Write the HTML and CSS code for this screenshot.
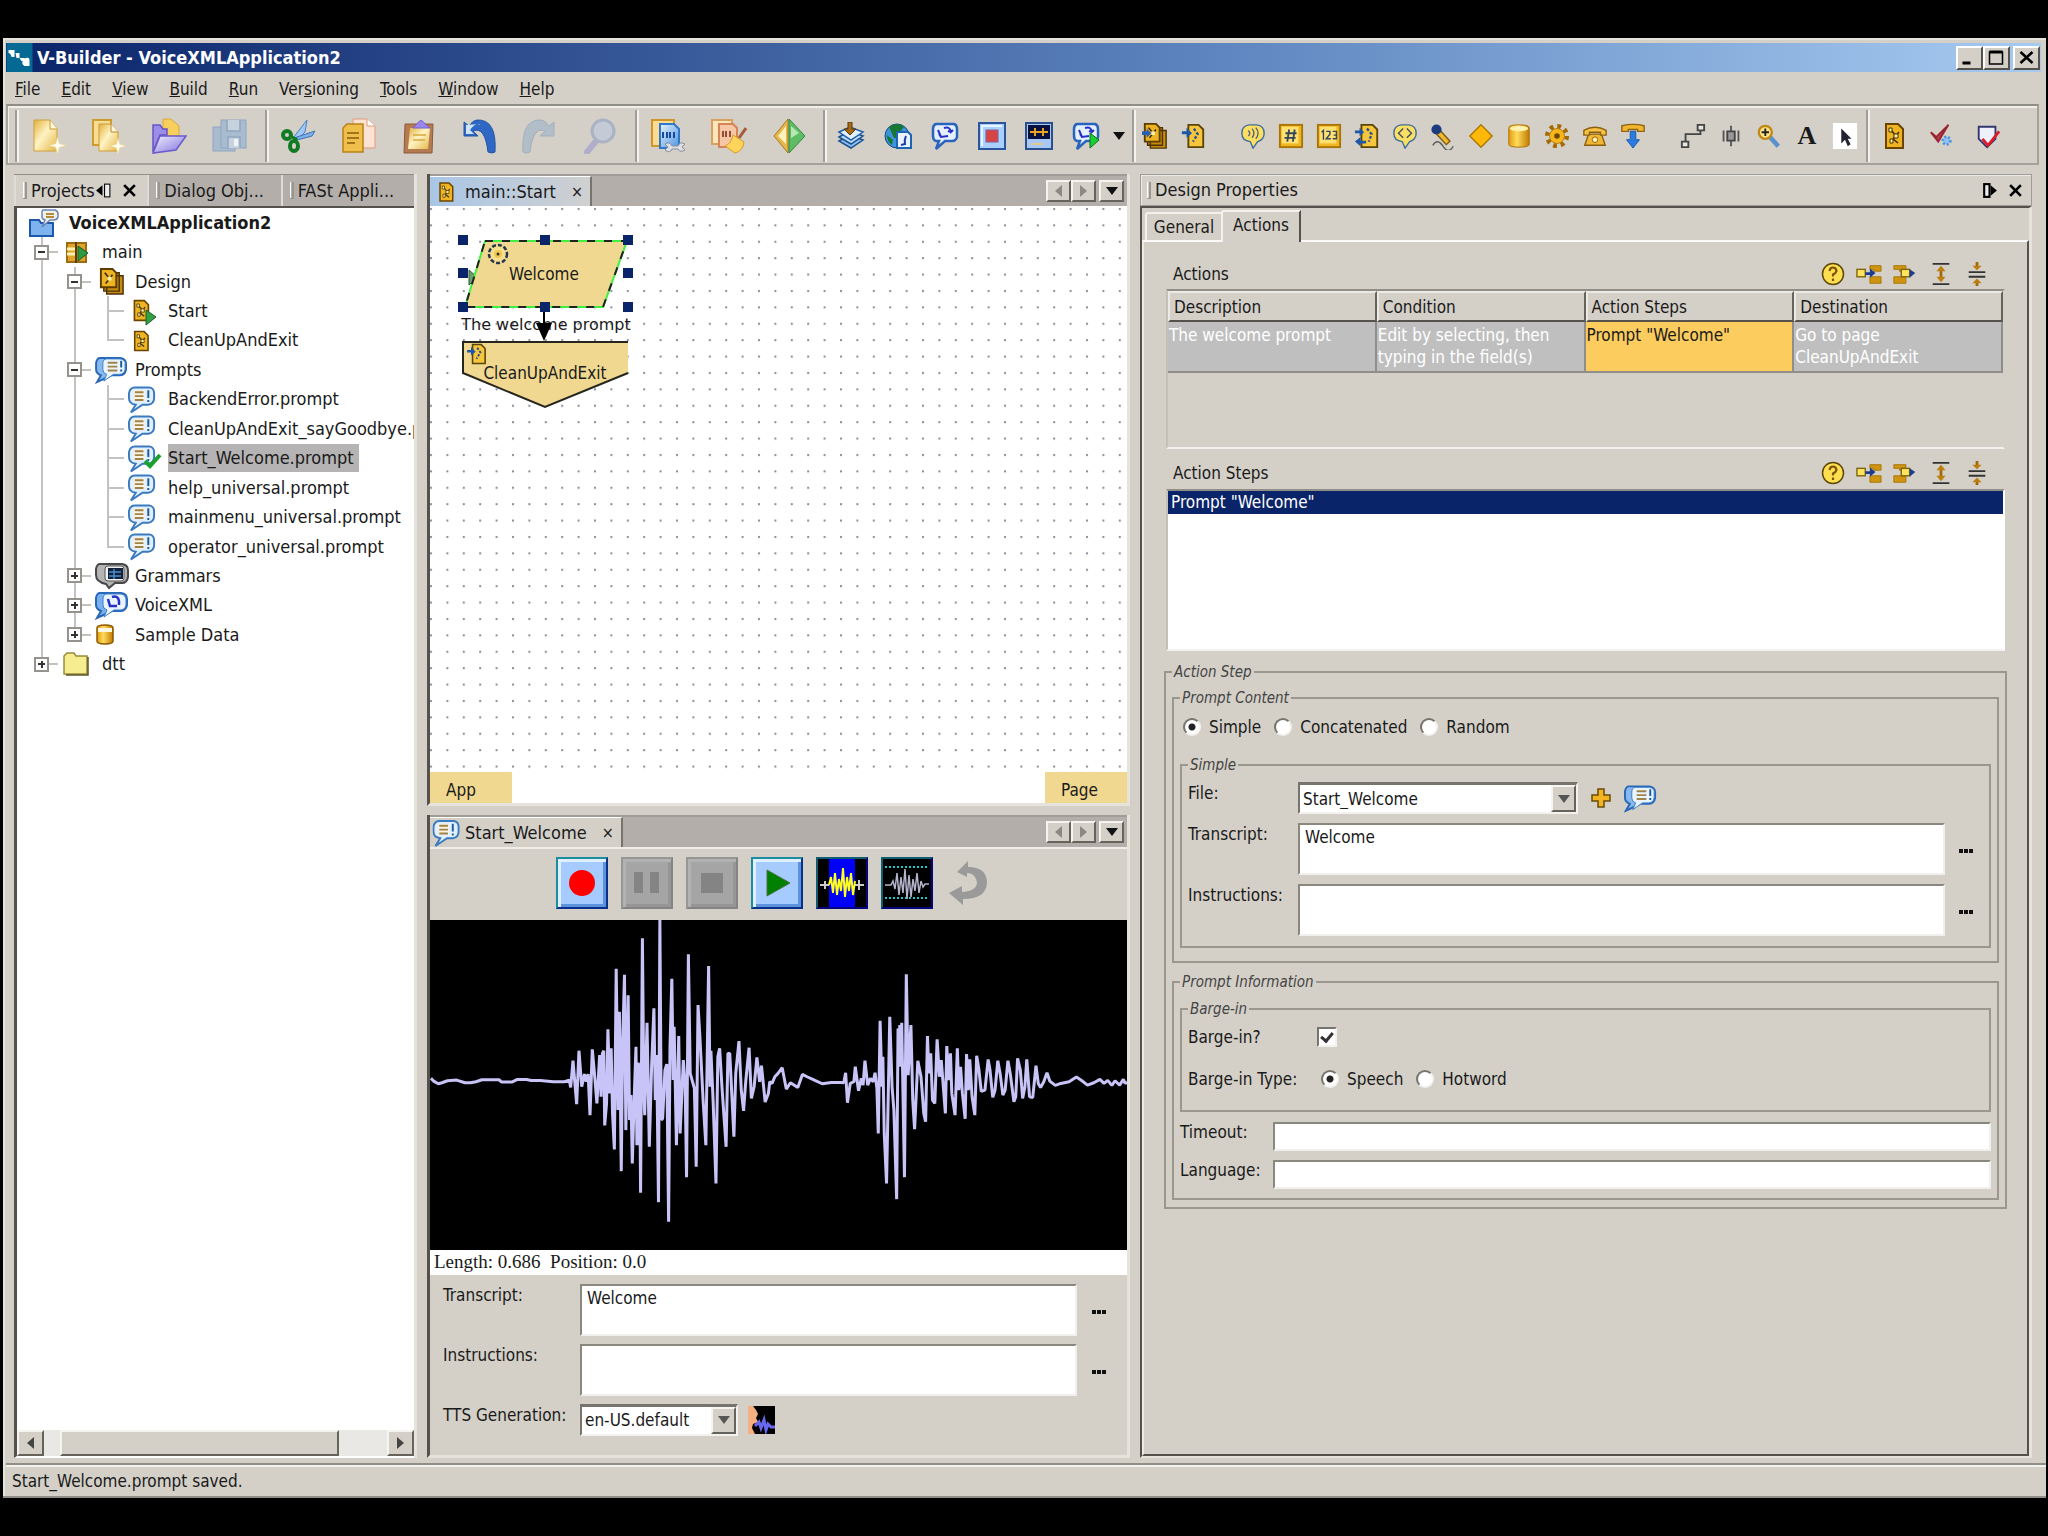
FILE: index.html
```html
<!DOCTYPE html>
<html lang="en">
<head>
<meta charset="utf-8">
<title>V-Builder - VoiceXMLApplication2</title>
<link rel="stylesheet" href="styles.css">
</head>
<body>
<svg class="defs" width="0" height="0" aria-hidden="true">
  <defs>
    <linearGradient id="gold" x1="0" y1="0" x2="1" y2="1"><stop offset="0" stop-color="#fff0b8"/><stop offset="1" stop-color="#d9a62c"/></linearGradient>
    <linearGradient id="paper" x1="0" y1="0" x2="1" y2="1"><stop offset="0" stop-color="#e2b03c"/><stop offset=".45" stop-color="#fff3c4"/><stop offset="1" stop-color="#e3b748"/></linearGradient>
    <linearGradient id="blue" x1="0" y1="0" x2="1" y2="1"><stop offset="0" stop-color="#e4f2ff"/><stop offset="1" stop-color="#4f94e0"/></linearGradient>
    <linearGradient id="violet" x1="0" y1="0" x2="1" y2="1"><stop offset="0" stop-color="#f2f0ff"/><stop offset="1" stop-color="#7d6fdc"/></linearGradient>
    <linearGradient id="cyl" x1="0" x2="1"><stop offset="0" stop-color="#e39a10"/><stop offset=".4" stop-color="#ffdc5c"/><stop offset="1" stop-color="#c27a00"/></linearGradient>
    <pattern id="grid" width="16.4" height="16.4" patternUnits="userSpaceOnUse"><rect x="0" y="2" width="2" height="2" fill="#8a8aa0"/></pattern>
  </defs>
  <symbol id="star" viewBox="0 0 14 14"><path d="M7 0L8.500 5.500 14 7 8.500 8.500 7 14 5.500 8.500 0 7 5.500 5.500Z" fill="#fffdf0" stroke="#f0d890" stroke-width=".5"/></symbol>
  <symbol id="new" viewBox="0 0 36 36"><path d="M3 2H19L26 11V33H3Z" fill="url(#paper)" stroke="#d0a23a"/><path d="M19 2V11H26" fill="#fff8dc" stroke="#c99a30"/><use href="#star" x="18" y="19" width="17" height="17"/></symbol>
  <symbol id="newcopy" viewBox="0 0 36 36"><path d="M2 2H20V27H2Z" fill="#f6dc94" stroke="#cf9c30" stroke-width="2"/><path d="M8 6H20L27 14V33H8Z" fill="url(#paper)" stroke="#cf9c30"/><path d="M20 6V14H27" fill="#fff8dc" stroke="#b58a28"/><use href="#star" x="19" y="20" width="16" height="16"/></symbol>
  <symbol id="open" viewBox="0 0 36 36"><path d="M12 1H20L28 8V18H12Z" fill="#f6cf5c" stroke="#d9a93a"/><path d="M2 7H9L12 11H16V17H9L2 34Z" fill="#9c8ee6" stroke="#6654c8" stroke-width="1.500"/><path d="M9 18H35L25 32 2 35Z" fill="url(#violet)" stroke="#6c5acb" stroke-width="1.500"/></symbol>
  <symbol id="save" viewBox="0 0 36 36"><g fill="#a9bccf" stroke="#8fa6bf"><rect x="2" y="9" width="22" height="24"/><rect x="10" y="2" width="25" height="28"/></g><path d="M16 2V13H29V2M17 30V19H29V30" fill="#c6d2dd" stroke="#8fa6bf" stroke-width="1.500"/><rect x="23" y="21" width="4" height="7" fill="#f0f2f4"/></symbol>
  <symbol id="cut" viewBox="0 0 36 36"><path d="M12 20L26 2 24 14 15 23Z" fill="#9fc8f4" stroke="#4c7fc0"/><path d="M13 20L34 13 31 18 16 22Z" fill="#7fb0ec" stroke="#3d72b8"/><g fill="none" stroke="#127a22" stroke-width="4"><ellipse cx="6" cy="17" rx="4" ry="4"/><ellipse cx="13" cy="28" rx="4" ry="5"/></g><path d="M9 18L15 21 14 24" stroke="#127a22" stroke-width="3" fill="none"/></symbol>
  <symbol id="copy" viewBox="0 0 36 36"><path d="M12 1H26L34 8V30H12Z" fill="#fbe3d4" stroke="#e09a7a"/><path d="M26 1V8H34" fill="#fff" stroke="#e09a7a"/><path d="M2 10L6 6H22V34H2Z" fill="#eebf4a" stroke="#b98218" stroke-width="1.500"/><path d="M6 15H18M6 20H18M6 25H14" stroke="#a3741a" stroke-width="2"/></symbol>
  <symbol id="paste" viewBox="0 0 36 36"><path d="M4 6H32L31 35H3Z" fill="#b67a50" stroke="#8a5a3c"/><path d="M9 10H29L27 31H7Z" fill="url(#paper)"/><path d="M12 17H25M12 22H24" stroke="#d8a840" stroke-width="1.500"/><path d="M12 10L16 6Q20-1 24 6L29 10Z" fill="#9a86ec" stroke="#7460cc"/></symbol>
  <symbol id="undo" viewBox="0 0 36 36"><path d="M3 4V18H17L12 13Q24 8 27 34 31 36 34 34 36 1 16 2 12 2 8 8Z" fill="#2f68c4" stroke="#2454a4"/><path d="M5 7V16H13L9 12Q13 5 20 6" fill="#cfe4ff"/></symbol>
  <symbol id="redo" viewBox="0 0 36 36"><path d="M33 4V18H19L24 13Q12 8 9 34 5 36 2 34 0 1 20 2 24 2 28 8Z" fill="#b1bdc7" stroke="#a2b0bd"/></symbol>
  <symbol id="find" viewBox="0 0 36 36"><path d="M16 22L6 34" stroke="#b0aecb" stroke-width="6" stroke-linecap="round"/><circle cx="22" cy="13" r="11" fill="#c5cbd6" stroke="#a9b3c4" stroke-width="3"/></symbol>
  <symbol id="build" viewBox="0 0 36 36"><rect x="1" y="2" width="22" height="26" fill="#f9dc92" stroke="#d0962c" stroke-width="2"/><path d="M9 6H23L28 11V30H9Z" fill="url(#blue)" stroke="#2f78d0" stroke-width="2"/><path d="M12 14V20M16 14V20M19 14V20M23 14V20" stroke="#164a9c" stroke-width="2"/><path d="M14 26Q19 23 21 28L27 28Q29 23 34 26L31 29 34 32Q29 35 27 31L21 31Q19 36 14 32L17 29Z" fill="#dcdee4" stroke="#888e98"/></symbol>
  <symbol id="clean" viewBox="0 0 36 36"><rect x="1" y="2" width="20" height="24" fill="#fbe6ba" stroke="#d9a060" stroke-width="2"/><path d="M8 6H22L26 10V29H8Z" fill="#f6c7a4" stroke="#d88258" stroke-width="2"/><path d="M12 13V19M15 13V19M19 13V19" stroke="#934f35" stroke-width="2"/><path d="M35 10L28 20" stroke="#a45c36" stroke-width="3"/><path d="M22 17L33 24Q32 33 24 35L14 28Q20 26 22 17Z" fill="#ffd45c" stroke="#d79a26"/></symbol>
  <symbol id="validate" viewBox="0 0 36 36"><path d="M17 1V35L3 18Z" fill="#e7b74c" stroke="#a87b24"/><path d="M15 8V26L7 18Z" fill="#fff2bc"/><path d="M18 1V35L34 18Z" fill="#5fbc65" stroke="#2c8838"/><path d="M20 8V20L28 15Z" fill="#b7e8b2"/></symbol>
  <symbol id="deploy" viewBox="0 0 28 28"><path d="M2 19L13 13 26 18 14 26Z" fill="#8fc0f4" stroke="#1c508c" stroke-width="1.500"/><path d="M2 15L13 9 26 14 14 22Z" fill="#b9dcff" stroke="#1c508c" stroke-width="1.500"/><path d="M2 10L13 5 26 10 14 18Z" fill="#dff0ff" stroke="#2260a8" stroke-width="1.500"/><path d="M15 0V7H19L13 13 7 7H11V0Z" fill="#a56a14" stroke="#5c3600"/></symbol>
  <symbol id="globe" viewBox="0 0 28 28"><circle cx="13" cy="14" r="12" fill="#3f92dc" stroke="#174a80"/><path d="M5 5Q14-1 20 5L15 11 17 16 10 16ZM3 13L9 18 8 23Q3 20 3 13Z" fill="#177832"/><path d="M13 10H24L27 13V26H13Z" fill="#e9f4ff" stroke="#1d64b4" stroke-width="2"/><path d="M22 14Q20 18 21 22L17 23" stroke="#1b3eb0" stroke-width="2" fill="none"/></symbol>
  <symbol id="vxml" viewBox="0 0 28 28"><path d="M5 2H23Q26 3 26 7V15Q25 19 21 19H14L5 27 8 19H5Q2 18 2 14V7Q2 3 5 2Z" fill="#e4f0ff" stroke="#2864bc" stroke-width="2.500"/><path d="M7 8L10 15 17 14M13 6Q19 4 20 10L22 8M20 10L17 9M10 15L8 12" stroke="#2430c8" stroke-width="2" fill="none"/></symbol>
  <symbol id="stop" viewBox="0 0 28 28"><rect x="1" y="1" width="26" height="26" fill="#a9d0ff" stroke="#29559c" stroke-width="2"/><path d="M4 24V4H24" fill="none" stroke="#e6f4ff" stroke-width="2"/><rect x="8" y="8" width="12" height="12" fill="#d84444" stroke="#7b5f96"/></symbol>
  <symbol id="monitor" viewBox="0 0 28 28"><rect x="1" y="1" width="26" height="26" fill="#a9c9f4" stroke="#28508c" stroke-width="2"/><rect x="3" y="3" width="22" height="14" fill="#081040"/><path d="M5 10H23M10 6V14M18 6V14" stroke="#e9a424" stroke-width="2"/><path d="M6 22H18" stroke="#e0c890" stroke-width="2"/></symbol>
  <symbol id="vrun" viewBox="0 0 28 28"><use href="#vxml" width="28" height="28"/><path d="M18 11L27 18 18 26Z" fill="#18d030" stroke="#087018"/></symbol>
  <symbol id="page" viewBox="0 0 24 28"><path d="M4 2H16L21 7V26H4Z" fill="#eeb422" stroke="#6a4400" stroke-width="2"/><path d="M9 8L14 14M17 10L11 17M11 17L16 21" stroke="#3a2a08" stroke-width="1.500"/><path d="M7 6H10V10H7ZM12 12H16V16H12ZM8 17H11V21H8Z" fill="#fff3a0" stroke="#4a3206"/></symbol>
  <symbol id="pages" viewBox="0 0 28 28"><path d="M9 8H26V27H9ZM6 5H22V24H6Z" fill="#c68b12" stroke="#4c3200" stroke-width="1.500"/><path d="M3 1H15L19 5V20H3Z" fill="#ecb322" stroke="#5c3c00" stroke-width="2"/><path d="M7 5L12 11L8 16M15 7L12 11" stroke="#2a200a" stroke-width="1.500" fill="none"/><rect x="10" y="9" width="4" height="4" fill="#fff2a8"/></symbol>
  <symbol id="inpages" viewBox="0 0 28 28"><use href="#pages" width="28" height="28"/><path d="M0 9H5V6L10 11 5 16V13H0Z" fill="#2a5fb0"/></symbol>
  <symbol id="inpage" viewBox="0 0 28 28"><path d="M9 2H20L25 7V26H9Z" fill="#f6c63c" stroke="#5a4408" stroke-width="2"/><path d="M15 6L19 12L14 20" stroke="#2a4c90" stroke-width="2.500" fill="none" stroke-dasharray="3 2"/><path d="M2 9H7V5L13 11 7 16V12H2Z" fill="#1e56a8"/></symbol>
  <symbol id="sub" viewBox="0 0 28 28"><path d="M8 2H20L25 7V26H8Z" fill="#f6c63c" stroke="#5a4408" stroke-width="2"/><path d="M14 6L19 12L16 20" stroke="#2a4c90" stroke-width="2.500" fill="none" stroke-dasharray="3 2"/><path d="M1 8H6V5L11 10 6 14V11H1ZM13 19H7V15L1 20 7 25V22H13Z" fill="#1e56a8"/></symbol>
  <symbol id="gbubble" viewBox="0 0 28 28"><path d="M10 2H18Q26 3 26 11 26 18 19 20L14 27 11 20Q2 19 2 11 2 3 10 2Z" fill="#fbdf62" stroke="#3c6c9c" stroke-width="1.500"/></symbol>
  <symbol id="speak" viewBox="0 0 28 28"><use href="#gbubble" width="28" height="28"/><path d="M9 8Q12 11 9 14M13 6Q17 11 13 16M17 5Q22 11 17 17" fill="none" stroke="#5a6472" stroke-width="1.500"/></symbol>
  <symbol id="brackets" viewBox="0 0 28 28"><use href="#gbubble" width="28" height="28"/><path d="M12 6L7 11 12 16M16 6L21 11 16 16" fill="none" stroke="#405068" stroke-width="1.500"/></symbol>
  <symbol id="tile" viewBox="0 0 28 28"><rect x="2" y="2" width="24" height="24" fill="#efb61f" stroke="#a8730a" stroke-width="2"/><rect x="4" y="4" width="18" height="18" fill="#ffe070"/></symbol>
  <symbol id="hash" viewBox="0 0 28 28"><use href="#tile" width="28" height="28"/><path d="M12 7L10 20M18 7L16 20M8 11H20M7 16H19" stroke="#33475c" stroke-width="2"/></symbol>
  <symbol id="digits" viewBox="0 0 28 28"><use href="#tile" width="28" height="28"/><path d="M6 10L8 8V18M11 9H15V12L11 17H16M18 9H22V17H18M19 13H22" fill="none" stroke="#33475c" stroke-width="1.500"/></symbol>
  <symbol id="mic" viewBox="0 0 28 28"><path d="M9 10L20 22" stroke="#7c5a10" stroke-width="7"/><path d="M9 10L19 21" stroke="#f0b82c" stroke-width="4"/><circle cx="7" cy="7" r="5.500" fill="#1c3c80"/><path d="M3 24Q8 16 14 25T25 25" fill="none" stroke="#5c5c5c" stroke-width="1.500"/></symbol>
  <symbol id="diamond" viewBox="0 0 28 28"><path d="M14 2L26 14 14 26 2 14Z" fill="#ffb808" stroke="#ac7600" stroke-width="1.500"/></symbol>
  <symbol id="cylinder" viewBox="0 0 28 28"><path d="M3 5Q3 2 14 2T25 5V23Q25 26 14 26T3 23Z" fill="url(#cyl)" stroke="#aa7000"/><ellipse cx="14" cy="6" rx="10" ry="3" fill="#fff0ac"/></symbol>
  <symbol id="gear" viewBox="0 0 28 28"><circle cx="14" cy="14" r="10.500" fill="none" stroke="#a36a04" stroke-width="5" stroke-dasharray="4 4.250"/><circle cx="14" cy="14" r="8" fill="#f7b71c" stroke="#b27a0a"/><circle cx="14" cy="14" r="3" fill="#6c4804"/></symbol>
  <symbol id="phone" viewBox="0 0 28 28"><path d="M7 12H21L25 24H3Z" fill="#f0b733" stroke="#8c5f0e" stroke-width="1.500"/><path d="M2 8Q14 1 26 8V13H20V10H8V13H2Z" fill="#f7c344" stroke="#8c5f0e" stroke-width="1.500"/><circle cx="14" cy="18" r="3" fill="#fff2b4" stroke="#8c5f0e"/></symbol>
  <symbol id="hang" viewBox="0 0 28 28"><path d="M2 3Q14 0 26 3V9H19V7H9V9H2Z" fill="#f2b62e" stroke="#906410" stroke-width="1.500"/><path d="M11 9H17V18H21L14 27 7 18H11Z" fill="#2c7be0" stroke="#1a58a8"/></symbol>
  <symbol id="link" viewBox="0 0 28 28"><path d="M6 20V12H22V6" fill="none" stroke="#444" stroke-width="2"/><path d="M19 2H26V8H19ZM2 20H9V26H2Z" fill="#e8e6e0" stroke="#444" stroke-width="2"/></symbol>
  <symbol id="align" viewBox="0 0 28 28"><path d="M10 9H18V19H10Z" fill="#999" stroke="#444" stroke-width="2"/><path d="M14 3V9M14 19V25M6 8V20M22 8V20" stroke="#555" stroke-width="2"/></symbol>
  <symbol id="zoomin" viewBox="0 0 28 28"><path d="M15 15L24 25" stroke="#5a90cc" stroke-width="5"/><circle cx="10" cy="10" r="7" fill="#ffe488" stroke="#c48814" stroke-width="2.500"/><path d="M10 6V14M6 10H14" stroke="#222" stroke-width="2"/></symbol>
  <symbol id="cursor" viewBox="0 0 28 28"><rect x="1" y="0" width="26" height="28" fill="#fff"/><path d="M10 6V22L14 18 17 25 20 23 17 17H21Z" fill="#223"/></symbol>
  <symbol id="chkset" viewBox="0 0 28 28"><path d="M3 10L9 15 22 2 11 20Z" fill="#b6434e" stroke="#9a2430" stroke-width="2"/><circle cx="20" cy="19" r="4" fill="#8fc4f8" stroke="#4c90dc" stroke-width="3" stroke-dasharray="2 2"/></symbol>
  <symbol id="shield" viewBox="0 0 28 28"><path d="M4 4H22V17L13 26 4 17Z" fill="#eef0fc" stroke="#30366c" stroke-width="2"/><path d="M8 17L14 24 26 9" fill="none" stroke="#dc1c28" stroke-width="3"/></symbol>
  <symbol id="bubble" viewBox="0 0 30 29"><path d="M7 2H22Q27 3 27 8V13Q27 19 21 20H15L3 28 8 20Q1 19 1 13V8Q2 2 7 2Z" fill="#e1efff" stroke="#3a7abf" stroke-width="2"/><rect x="6" y="5" width="11" height="11" fill="#faf3e4"/><path d="M7 7H16M7 11H16M7 15H16" stroke="#a08346" stroke-width="2"/><path d="M21 5V13M21 15V17" stroke="#1c5c9c" stroke-width="2"/></symbol>
  <symbol id="bubbles" viewBox="0 0 36 29"><path d="M5 2H26Q32 3 32 8V14Q31 20 25 20H17L2 27 6 20Q1 18 1 14V7Q2 2 5 2Z" fill="#87b8ee" stroke="#2868b8" stroke-width="2"/><path d="M12 3H26Q32 4 31 9V14Q30 19 25 19H19L9 26 12 19Q8 18 8 14V8Q8 3 12 3Z" fill="#eaf4ff" stroke="#3c7cc4"/><path d="M13 7H23M13 11H23M13 15H23" stroke="#a08346" stroke-width="2"/><path d="M27 5V12M27 14V16" stroke="#1c5c9c" stroke-width="2"/></symbol>
  <symbol id="i-root" viewBox="0 0 44 29"><path d="M5 12H14L16 15H28V28H5Z" fill="#7db4f0" stroke="#1c58ac" stroke-width="2"/><path d="M18 2H30Q33 3 33 6V9Q32 12 29 12H25L17 19 20 12Q17 11 17 9V5Q17 2 18 2Z" fill="#f0f0e4" stroke="#6a84b8" stroke-width="1.500"/><path d="M21 6H29M21 9H29" stroke="#b08c3c" stroke-width="2"/></symbol>
  <symbol id="i-main" viewBox="0 0 44 29"><rect x="9" y="5" width="19" height="19" fill="#e0a428" stroke="#9c6c10" stroke-width="2"/><path d="M18 4V25" stroke="#5c3c04" stroke-width="2"/><path d="M9 11H17M9 16H17" stroke="#fff1b4" stroke-width="3"/><path d="M20 8L30 15 20 23Z" fill="#2e9840" stroke="#176024"/></symbol>
  <symbol id="i-design" viewBox="0 0 44 29"><use href="#pages" x="7" y="1" width="27" height="27"/></symbol>
  <symbol id="i-start" viewBox="0 0 44 29"><use href="#page" x="7" y="2" width="20" height="23"/><path d="M22 13L32 20 22 28Z" fill="#33a044" stroke="#176024"/></symbol>
  <symbol id="i-page" viewBox="0 0 44 29"><use href="#page" x="7" y="4" width="20" height="22"/></symbol>
  <symbol id="i-prompts" viewBox="0 0 44 29"><use href="#bubbles" x="4" y="1" width="35" height="28"/></symbol>
  <symbol id="i-prompt" viewBox="0 0 44 29"><use href="#bubble" x="4" y="0" width="29" height="29"/></symbol>
  <symbol id="i-promptok" viewBox="0 0 44 29"><use href="#bubble" x="4" y="0" width="29" height="29"/><path d="M21 17L26 22 36 11" fill="none" stroke="#1aa02c" stroke-width="4"/></symbol>
  <symbol id="i-grammars" viewBox="0 0 44 29"><path d="M9 3H31Q37 4 37 9V16Q36 22 31 22H24L18 27 15 23Q5 21 5 14V8Q6 3 9 3Z" fill="#b4b4b4" stroke="#484848" stroke-width="2"/><rect x="14" y="5" width="19" height="15" rx="3" fill="#f0f0f0" stroke="#555"/><rect x="17" y="7" width="15" height="11" fill="#122038"/><path d="M18 11H30M18 15H30M23 8V18" stroke="#4a8cd0" stroke-width="1.500"/></symbol>
  <symbol id="i-vxml" viewBox="0 0 44 29"><path d="M9 2H30Q36 3 36 8V14Q35 20 29 20H21L6 27 10 20Q5 18 5 14V7Q6 2 9 2Z" fill="#79b0ee" stroke="#2868b8" stroke-width="2"/><path d="M16 3H30Q35 4 35 9V14Q34 19 29 19H23L13 26 16 19Q12 18 12 14V8Q12 3 16 3Z" fill="#eaf4ff" stroke="#3c7cc4"/><path d="M17 8L19 15 26 15M21 6Q27 4 28 10V14" stroke="#2430c8" stroke-width="2.500" fill="none"/></symbol>
  <symbol id="i-data" viewBox="0 0 44 29"><path d="M6 8Q6 5 14 5T22 8V21Q22 24 14 24T6 21Z" fill="url(#cyl)" stroke="#8c5a00" stroke-width="1.500"/><path d="M7 8H21V12H7Z" fill="#fff8e0"/></symbol>
  <symbol id="i-folder" viewBox="0 0 44 29"><path d="M6 6L9 3H16L18 6H29V24H6Z" fill="#f6ec90" stroke="#9a8a38" stroke-width="1.500"/><path d="M30 7V25H8" fill="none" stroke="#5e5424" stroke-width="1.500"/></symbol>
  <symbol id="help" viewBox="0 0 24 24"><circle cx="12" cy="12" r="10.500" fill="#ffdf50" stroke="#5c4808" stroke-width="1.500"/><path d="M8.500 9Q9 5.500 12 5.500T15.500 9Q15 11 12 12.500V14.500M12 16.500V19" fill="none" stroke="#7c5404" stroke-width="2.200"/></symbol>
  <symbol id="insbefore" viewBox="0 0 28 24"><path d="M15 3H27V9H19V7H15ZM15 15H27V22H15Z" fill="#cf9410" stroke="#a87808"/><rect x="1" y="7" width="9" height="8" fill="#ffe45c" stroke="#7c6410" stroke-width="1.500"/><path d="M10 10H15V6L21 11 15 16V13H10Z" fill="#1c3c8c"/></symbol>
  <symbol id="insafter" viewBox="0 0 28 24"><path d="M2 3H15V9H8V7H2ZM2 15H15V22H2Z" fill="#cf9410" stroke="#a87808"/><rect x="10" y="7" width="9" height="8" fill="#ffe45c" stroke="#7c6410" stroke-width="1.500"/><path d="M19 10V7L25 11 19 16Z" fill="#1c3c8c"/></symbol>
  <symbol id="expand" viewBox="0 0 24 26"><path d="M3 2H21M3 24H21" stroke="#333" stroke-width="2"/><path d="M12 6V20" stroke="#a06808" stroke-width="3"/><path d="M12 4L17 10H7ZM12 22L17 16H7Z" fill="#bd7e10"/></symbol>
  <symbol id="collapse" viewBox="0 0 24 26"><path d="M3 11H21M3 16H21" stroke="#333" stroke-width="2"/><path d="M12 0V5M12 22V26" stroke="#a06808" stroke-width="3"/><path d="M12 9L17 4H7ZM12 18L17 23H7Z" fill="#bd7e10"/></symbol>
  <symbol id="miniwave" viewBox="0 0 48 48"><path d="M2 26H8L10 22 12 30 14 14 16 36 18 18 20 34 22 10 24 40 26 16 28 38 30 20 32 32 34 14 36 34 38 22 40 28 42 25H46" fill="none" stroke="currentColor" stroke-width="1.500"/></symbol>
</svg>

<div class="window">
  <header class="titlebar">
    <svg class="logo" viewBox="0 0 26 29"><rect width="26" height="29" fill="#046a94"/><path d="M2 7H8V14H5Q4 10 2 10Z M9 10H13V15H10Z M13 15H18V18H15Z M17 16Q23 13 23 17V23H18Q14 21 17 16Z" fill="#fff"/></svg>
    <h1 class="title">V-Builder - VoiceXMLApplication2</h1>
    <div class="winbtns">
      <button class="wb" aria-label="Minimize"><svg viewBox="0 0 22 20"><path d="M4 15H12" stroke="#000" stroke-width="3"/></svg></button>
      <button class="wb" aria-label="Maximize"><svg viewBox="0 0 22 20"><path d="M4 4H17V16H4Z" fill="none" stroke="#000" stroke-width="1.500"/><path d="M4 4H17" stroke="#000" stroke-width="3"/></svg></button>
      <button class="wb wb-close" aria-label="Close"><svg viewBox="0 0 22 20"><path d="M5 4L17 15M17 4L5 15" stroke="#000" stroke-width="2.500"/></svg></button>
    </div>
  </header>

  <nav class="menubar">
    <button><u>F</u>ile</button><button><u>E</u>dit</button><button><u>V</u>iew</button><button><u>B</u>uild</button><button><u>R</u>un</button><button>Ver<u>s</u>ioning</button><button><u>T</u>ools</button><button><u>W</u>indow</button><button><u>H</u>elp</button>
  </nav>

  <div class="toolbar" role="toolbar">
    <div class="tgroup big">
      <button aria-label="New"><svg><use href="#new"/></svg></button><button aria-label="New from copy"><svg><use href="#newcopy"/></svg></button><button aria-label="Open"><svg><use href="#open"/></svg></button><button aria-label="Save all"><svg><use href="#save"/></svg></button>
    </div>
    <div class="tgroup big">
      <button aria-label="Cut"><svg><use href="#cut"/></svg></button><button aria-label="Copy"><svg><use href="#copy"/></svg></button><button aria-label="Paste"><svg><use href="#paste"/></svg></button><button aria-label="Undo"><svg><use href="#undo"/></svg></button><button aria-label="Redo"><svg><use href="#redo"/></svg></button><button aria-label="Find"><svg><use href="#find"/></svg></button>
    </div>
    <div class="tgroup big short">
      <button aria-label="Build"><svg><use href="#build"/></svg></button><button aria-label="Clean and build"><svg><use href="#clean"/></svg></button><button aria-label="Validate"><svg><use href="#validate"/></svg></button>
    </div>
    <div class="tgroup mid">
      <button aria-label="Deploy"><svg><use href="#deploy"/></svg></button><button aria-label="Publish"><svg><use href="#globe"/></svg></button><button aria-label="VoiceXML"><svg><use href="#vxml"/></svg></button><button aria-label="Stop"><svg><use href="#stop"/></svg></button><button aria-label="Monitor"><svg><use href="#monitor"/></svg></button><button aria-label="Run"><svg><use href="#vrun"/></svg></button><button class="drop" aria-label="Run options"><span class="tri down"></span></button>
    </div>
    <div class="tgroup small">
      <button aria-label="Go to pages"><svg><use href="#inpages"/></svg></button><button aria-label="Go to page"><svg><use href="#inpage"/></svg></button>
      <span class="space"></span>
      <button aria-label="Prompt"><svg><use href="#speak"/></svg></button><button aria-label="Menu"><svg><use href="#hash"/></svg></button><button aria-label="Form"><svg><use href="#digits"/></svg></button><button aria-label="Subdialog"><svg><use href="#sub"/></svg></button><button aria-label="Script"><svg><use href="#brackets"/></svg></button><button aria-label="Record"><svg><use href="#mic"/></svg></button><button aria-label="Decision"><svg><use href="#diamond"/></svg></button><button aria-label="Data"><svg><use href="#cylinder"/></svg></button><button aria-label="Process"><svg><use href="#gear"/></svg></button><button aria-label="Call"><svg><use href="#phone"/></svg></button><button aria-label="Hang up"><svg><use href="#hang"/></svg></button>
      <span class="space"></span>
      <button aria-label="Connect"><svg><use href="#link"/></svg></button><button aria-label="Align"><svg><use href="#align"/></svg></button><button aria-label="Zoom"><svg><use href="#zoomin"/></svg></button><button class="letter">A</button><button aria-label="Select"><svg><use href="#cursor"/></svg></button>
    </div>
    <div class="tgroup last">
      <button aria-label="Page"><svg><use href="#page"/></svg></button><button aria-label="Check settings"><svg><use href="#chkset"/></svg></button><button aria-label="Check page"><svg><use href="#shield"/></svg></button>
    </div>
  </div>

  <main class="work">
    <section class="panel">
      <div class="ptabs">
        <button class="ptab on"><i class="grip"></i>Projects<svg class="pin" viewBox="0 0 16 16"><path d="M7 3V13L1 8Z" fill="#000"/><rect x="9" y="2" width="5" height="12" fill="#eee" stroke="#000"/></svg><svg class="x" viewBox="0 0 14 14"><path d="M2 2L12 12M12 2L2 12" stroke="#000" stroke-width="2.500"/></svg></button>
        <button class="ptab"><i class="grip"></i>Dialog Obj...</button>
        <button class="ptab"><i class="grip"></i>FASt Appli...</button>
      </div>
      <div class="treebox">
        <ul class="tree">
          <li class="root"><svg><use href="#i-root"/></svg><b>VoiceXMLApplication2</b></li>
          <li><i class="v h"><s class="box minus"></s></i><svg><use href="#i-main"/></svg><span>main</span></li>
          <li><i class="v"></i><i class="v h"><s class="box minus"></s></i><svg><use href="#i-design"/></svg><span>Design</span></li>
          <li><i class="v"></i><i class="v"></i><i class="v h"></i><svg><use href="#i-start"/></svg><span>Start</span></li>
          <li><i class="v"></i><i class="v"></i><i class="v h end"></i><svg><use href="#i-page"/></svg><span>CleanUpAndExit</span></li>
          <li><i class="v"></i><i class="v h"><s class="box minus"></s></i><svg><use href="#i-prompts"/></svg><span>Prompts</span></li>
          <li><i class="v"></i><i class="v"></i><i class="v h"></i><svg><use href="#i-prompt"/></svg><span>BackendError.prompt</span></li>
          <li><i class="v"></i><i class="v"></i><i class="v h"></i><svg><use href="#i-prompt"/></svg><span>CleanUpAndExit_sayGoodbye.p</span></li>
          <li><i class="v"></i><i class="v"></i><i class="v h"></i><svg><use href="#i-promptok"/></svg><span class="sel">Start_Welcome.prompt</span></li>
          <li><i class="v"></i><i class="v"></i><i class="v h"></i><svg><use href="#i-prompt"/></svg><span>help_universal.prompt</span></li>
          <li><i class="v"></i><i class="v"></i><i class="v h"></i><svg><use href="#i-prompt"/></svg><span>mainmenu_universal.prompt</span></li>
          <li><i class="v"></i><i class="v"></i><i class="v h end"></i><svg><use href="#i-prompt"/></svg><span>operator_universal.prompt</span></li>
          <li><i class="v"></i><i class="v h"><s class="box plus"></s></i><svg><use href="#i-grammars"/></svg><span>Grammars</span></li>
          <li><i class="v"></i><i class="v h"><s class="box plus"></s></i><svg><use href="#i-vxml"/></svg><span>VoiceXML</span></li>
          <li><i class="v"></i><i class="v h end"><s class="box plus"></s></i><svg><use href="#i-data"/></svg><span>Sample Data</span></li>
          <li><i class="v h end"><s class="box plus"></s></i><svg><use href="#i-folder"/></svg><span>dtt</span></li>
        </ul>
        <div class="hscroll">
          <button class="sb" aria-label="Scroll left"><span class="tri left"></span></button>
          <div class="track"><div class="thumb"></div></div>
          <button class="sb" aria-label="Scroll right"><span class="tri right"></span></button>
        </div>
      </div>
    </section>

    <div class="center">
      <section class="panel editor">
        <div class="dtabs">
          <button class="dtab blue"><svg class="dicon" viewBox="0 0 24 28"><use href="#page"/></svg>main::Start<span class="dx">×</span></button>
          <div class="dnav"><button aria-label="Previous"><span class="tri left off"></span></button><button aria-label="Next"><span class="tri right off"></span></button><button class="dlist" aria-label="List"><span class="tri down"></span></button></div>
        </div>
        <div class="canvas">
          <svg class="diagram" width="100%" height="100%">
            <rect width="100%" height="565" fill="url(#grid)"/>
            <path d="M39 64L47 71 39 79Z" fill="#6fa070" stroke="#2c5a30"/>
            <path d="M55 35H197L173 101H35Z" fill="#f0d890"/>
            <path d="M55 35H197L173 101H35Z" fill="none" stroke="#40f040" stroke-width="2"/>
            <path d="M55 35H197L173 101H35Z" fill="none" stroke="#222" stroke-width="2" stroke-dasharray="8 9"/>
            <circle cx="68" cy="48" r="9" fill="#f6df90" stroke="#26354a" stroke-width="2.500" stroke-dasharray="4 2"/><circle cx="68" cy="48" r="4" fill="#f0c850"/><circle cx="68" cy="48" r="1.500" fill="#333"/>
            <text x="114" y="74" text-anchor="middle">Welcome</text>
            <text class="wide" x="116" y="124" text-anchor="middle">The welcome prompt</text>
            <path d="M33 136H198V167L115 201 33 167Z" fill="#f0d890"/>
            <path d="M198 136H33V167L115 201 198 167" fill="none" stroke="#26261e" stroke-width="2"/>
            <path d="M114 101V120" stroke="#000" stroke-width="2"/><path d="M106 117H122L114 135Z"/>
            <use href="#inpage" x="35" y="137" width="23" height="22"/>
            <text x="115" y="173" text-anchor="middle">CleanUpAndExit</text>
            <g fill="#0a246a"><path d="M28 29h10v10h-10zM110 29h10v10h-10zM193 29h10v10h-10zM28 62h10v10h-10zM193 62h10v10h-10zM28 96h10v10h-10zM110 96h10v10h-10zM193 96h10v10h-10z"/></g>
          </svg>
          <div class="crumbs"><button>App</button><button>Page</button></div>
        </div>
      </section>

      <section class="panel prompt">
        <div class="dtabs">
          <button class="dtab"><svg class="dicon wide" viewBox="0 0 30 29"><use href="#bubble"/></svg>Start_Welcome<span class="dx">×</span></button>
          <div class="dnav"><button aria-label="Previous"><span class="tri left off"></span></button><button aria-label="Next"><span class="tri right off"></span></button><button class="dlist" aria-label="List"><span class="tri down"></span></button></div>
        </div>
        <div class="promptbody">
          <div class="recbar">
            <button class="rb live" aria-label="Record"><svg viewBox="0 0 48 48"><circle cx="24" cy="24" r="13" fill="#f00"/></svg></button>
            <button class="rb dim" aria-label="Pause"><svg viewBox="0 0 48 48"><path d="M11 13H20V34H11ZM27 13H36V34H27Z" fill="#848484"/></svg></button>
            <button class="rb dim" aria-label="Stop"><svg viewBox="0 0 48 48"><path d="M13 14H35V34H13Z" fill="#848484"/></svg></button>
            <button class="rb live" aria-label="Play"><svg viewBox="0 0 48 48"><path d="M14 11L37 24 14 37Z" fill="#008000" stroke="#4c7040"/></svg></button>
            <button class="rb dark" aria-label="Select all"><svg viewBox="0 0 48 48"><rect x="11" width="26" height="48" fill="#0000f8"/><path d="M2 26H11M37 26H46M7 22V30M41 21V31" stroke="#ccc" stroke-width="2"/><path d="M11 26L13 18 15 34 17 14 19 36 21 20 23 32 25 9 27 38 29 18 31 32 33 14 35 36 37 22" fill="none" stroke="#ffff20" stroke-width="2"/></svg></button>
            <button class="rb dark" aria-label="Trim"><svg viewBox="0 0 48 48"><path d="M2 8H46M2 39H46" stroke="#20c8c8" stroke-width="2" stroke-dasharray="2 2"/><use href="#miniwave" color="#b4b4cc"/></svg></button>
            <button class="rb plain" aria-label="Revert"><svg viewBox="0 0 48 48"><path d="M9 13L20 2V8Q39 8 39 24 38 40 15 40V46L1 34 14 27V33Q29 32 29 23 27 14 19 14V18Z" fill="#9a9a9a"/></svg></button>
          </div>
          <div class="wave"><svg viewBox="22 60 1516 988" preserveAspectRatio="none"><polyline vector-effect="non-scaling-stroke" points="24,535 30,543 40,551 48,548 60,542 80,540 98,548 110,548 122,545 135,539 172,539 178,546 200,546 212,538 232,538 242,541 262,541 290,545 314,545 325,540 328,562 333,482 341,612 346,452 352,560 358,522 362,545 366,522 370,645 375,448 380,525 385,610 391,465 394,590 397,460 400,452 402,676 406,610 409,388 413,580 416,445 419,640 423,748 427,206 431,630 434,335 438,813 441,430 445,224 448,690 451,430 453,286 456,660 459,585 462,790 466,600 470,440 472,735 475,487 477,735 478,490 480,878 484,115 487,560 489,645 494,368 499,740 504,500 509,325 512,600 515,465 519,906 522,60 525,660 528,655 533,510 537,492 541,965 544,440 548,236 551,540 553,380 558,735 563,408 566,700 573,480 577,560 580,831 584,163 588,520 597,565 601,800 605,315 609,410 616,600 622,735 628,198 631,560 633,452 638,610 644,850 648,470 652,445 657,560 666,740 670,460 674,460 683,710 687,520 694,423 699,570 704,632 709,540 716,443 721,595 727,560 733,472 739,545 743,497 751,606 758,580 761,545 766,550 772,530 779,520 788,503 797,567 806,548 812,553 822,562 832,523 842,530 858,540 875,551 895,547 915,547 922,548 926,518 930,608 936,550 944,545 947,500 954,572 960,535 964,555 968,482 974,555 980,535 986,545 990,518 994,565 997,700 1001,362 1005,560 1007,470 1010,700 1015,850 1022,350 1027,560 1031,630 1037,897 1040,385 1042,415 1044,375 1046,500 1048,368 1054,831 1058,223 1062,525 1068,375 1072,600 1076,687 1083,482 1090,530 1096,640 1100,665 1104,408 1107,520 1111,460 1115,600 1120,610 1125,418 1130,530 1134,480 1143,640 1146,438 1150,540 1154,460 1157,580 1164,645 1169,445 1172,570 1176,500 1180,580 1186,656 1189,462 1193,570 1196,478 1201,590 1207,645 1211,467 1216,510 1221,574 1229,570 1236,478 1240,510 1246,592 1251,570 1257,482 1262,520 1268,585 1273,570 1279,482 1284,520 1292,605 1296,590 1300,475 1306,510 1311,595 1316,560 1320,478 1326,590 1333,592 1340,497 1345,550 1350,562 1357,545 1364,518 1370,543 1382,556 1394,550 1412,545 1428,531 1440,542 1452,555 1466,548 1479,538 1488,550 1496,541 1505,556 1512,542 1522,555 1530,538 1534,550 1538,546"/></svg></div>
          <div class="length">Length: 0.686 &nbsp;Position: 0.0</div>
          <form class="pform">
            <label for="tr1">Transcript:</label><textarea id="tr1" rows="2">Welcome</textarea><button type="button" class="dots" aria-label="Edit transcript"></button>
            <label for="in1">Instructions:</label><textarea id="in1" rows="2"></textarea><button type="button" class="dots" aria-label="Edit instructions"></button>
            <label for="tts">TTS Generation:</label>
            <div class="line"><span class="combo tts"><select id="tts"><option>en-US.default</option></select><span class="cbtn"><span class="tri down"></span></span></span>
            <button type="button" class="iconbtn face" aria-label="Generate speech"><svg viewBox="0 0 27 28"><rect x="3" width="24" height="28" fill="#000"/><path d="M0 0H5L8 4 10 8 8 12 10 16 5 18 4 22 7 28H0Z" fill="#f4b080"/><path d="M7 20L11 16 13 22 16 14 18 24 20 18 23 21H27" fill="none" stroke="#6868f0" stroke-width="3"/></svg></button></div>
          </form>
        </div>
      </section>
    </div>

    <section class="panel props">
      <div class="phead"><i class="grip"></i><span>Design Properties</span><svg class="pin" viewBox="0 0 16 16"><path d="M9 3V13L15 8Z" fill="#000"/><rect x="3" y="2" width="5" height="12" fill="#eee" stroke="#000" stroke-width="2"/></svg><svg class="x" viewBox="0 0 14 14"><path d="M2 2L12 12M12 2L2 12" stroke="#000" stroke-width="2.500"/></svg></div>
      <div class="pbody">
        <div class="subtabs"><button class="sub">General</button><button class="sub on">Actions</button></div>
        <div class="pane">
          <div class="bar"><h2>Actions</h2><div class="tools"><button aria-label="Help"><svg><use href="#help"/></svg></button><button aria-label="Insert before"><svg><use href="#insbefore"/></svg></button><button aria-label="Insert after"><svg><use href="#insafter"/></svg></button><button aria-label="Expand"><svg><use href="#expand"/></svg></button><button aria-label="Collapse"><svg><use href="#collapse"/></svg></button></div></div>
          <div class="tablebox">
            <table>
              <thead><tr><th>Description</th><th>Condition</th><th>Action Steps</th><th>Destination</th></tr></thead>
              <tbody><tr><td>The welcome prompt</td><td>Edit by selecting, then typing in the field(s)</td><td class="hot">Prompt "Welcome"</td><td>Go to page<br>CleanUpAndExit</td></tr></tbody>
            </table>
          </div>
          <div class="bar second"><h2>Action Steps</h2><div class="tools"><button aria-label="Help"><svg><use href="#help"/></svg></button><button aria-label="Insert before"><svg><use href="#insbefore"/></svg></button><button aria-label="Insert after"><svg><use href="#insafter"/></svg></button><button aria-label="Expand"><svg><use href="#expand"/></svg></button><button aria-label="Collapse"><svg><use href="#collapse"/></svg></button></div></div>
          <ul class="steps"><li>Prompt "Welcome"</li></ul>

          <form>
          <fieldset class="outer"><legend>Action Step</legend>
            <fieldset class="content"><legend>Prompt Content</legend>
              <div class="radios"><label><input type="radio" name="kind" checked>Simple</label><label><input type="radio" name="kind">Concatenated</label><label><input type="radio" name="kind">Random</label></div>
              <fieldset class="simple"><legend>Simple</legend>
                <div class="sgrid">
                  <label for="file">File:</label>
                  <div class="line"><span class="combo file"><select id="file"><option>Start_Welcome</option></select><span class="cbtn"><span class="tri down"></span></span></span>
                  <button type="button" class="iconbtn" aria-label="Add file"><svg width="20" height="20" viewBox="0 0 20 20"><path d="M7 1H13V7H19V13H13V19H7V13H1V7H7Z" fill="#f2b420" stroke="#6a4a08" stroke-width="1.500"/></svg></button>
                  <button type="button" class="iconbtn" aria-label="Open prompt"><svg width="35" height="29" viewBox="0 0 36 29"><use href="#bubbles"/></svg></button></div>
                  <label for="tr2">Transcript:</label><textarea id="tr2" rows="2">Welcome</textarea><button type="button" class="dots" aria-label="Edit transcript"></button>
                  <label for="in2">Instructions:</label><textarea id="in2" rows="2"></textarea><button type="button" class="dots" aria-label="Edit instructions"></button>
                </div>
              </fieldset>
            </fieldset>
            <fieldset class="info"><legend>Prompt Information</legend>
              <fieldset class="barge"><legend>Barge-in</legend>
                <div class="brow"><label for="bi">Barge-in?</label><input type="checkbox" id="bi" checked></div>
                <div class="brow"><span>Barge-in Type:</span><div class="radios"><label><input type="radio" name="bt" checked>Speech</label><label><input type="radio" name="bt">Hotword</label></div></div>
              </fieldset>
              <div class="igrid"><label for="to">Timeout:</label><input type="text" id="to"><label for="la">Language:</label><input type="text" id="la"></div>
            </fieldset>
          </fieldset>
          </form>
        </div>
      </div>
    </section>
  </main>
  <footer class="status">Start_Welcome.prompt saved.</footer>
</div>
</body>
</html>
```
FILE: styles.css
```css
:root {
  --face: #d4d0c8;
  --bar: #b3aeaa;
  --dark: #55524c;
  --mid: #918e86;
  --light: #f4f2ee;
  --sand: #f0d890;
}
* { box-sizing: border-box; }
body {
  margin: 0;
  min-height: 100vh;
  padding: 38px 2px 38px 3px;
  background: #000;
  display: flex;
  font: 17px/20px "DejaVu Sans Condensed", "DejaVu Sans", sans-serif;
  color: #1a1a1a;
}
button, input, select, textarea { font: inherit; color: inherit; margin: 0; }
button { background: none; border: 0; padding: 0; }
h1, h2, ul { margin: 0; padding: 0; font-size: inherit; list-style: none; }
.defs { position: absolute; }

.window {
  flex: 1;
  min-width: 0;
  display: flex;
  flex-direction: column;
  background: var(--face);
  border: solid var(--mid);
  border-width: 0 0 2px;
  box-shadow: inset 2px 2px #e6e3dd;
}
.titlebar {
  display: flex;
  align-items: center;
  height: 29px;
  margin: 5px 5px 0 3px;
  background: linear-gradient(90deg, #0a246a, #5f86c0 60%, #a6caf0);
  color: #fff;
}
.logo { width: 27px; height: 29px; margin-right: 4px; }
.title { font-weight: bold; font-size: 18px; line-height: 29px; flex: 1; }
.winbtns { display: flex; padding-right: 1px; }
.wb {
  width: 27px; height: 24px;
  background: var(--face);
  border: 2px solid;
  border-color: #fff #55524c #55524c #fff;
}
.wb svg { display: block; width: 23px; height: 20px; }
.wb-close { margin-left: 3px; }

.menubar { display: flex; height: 32px; padding: 2px 0 0 12px; gap: 21px; align-items: center; }

.toolbar {
  display: flex;
  height: 61px;
  margin: 0 7px 0 3px;
  border: 2px solid #a5a29b;
  border-top-color: var(--mid);
  box-shadow: inset 1px 2px #f1efea;
  padding: 4px 0 0 9px;
}
.tgroup {
  display: flex;
  height: 52px;
  padding-bottom: 1px;
  align-items: center;
  border-left: 2px solid #f4f2ee;
  box-shadow: -2px 0 #a09d96;
}
.tgroup button { display: flex; justify-content: center; align-items: center; height: 36px; }
.tgroup svg { width: 28px; height: 28px; }
.big button { width: 60px; }
.big svg { width: 36px; height: 36px; }
.big { padding-right: 8px; }
.short { padding-right: 6px; }
.mid button { width: 47px; }
.mid .drop { width: 20px; }
.mid { padding-right: 5px; }
.small button { width: 38px; }
.small svg, .last svg { width: 26px; height: 28px; }
.small .space { width: 22px; }
.small .letter { font: bold 26px/28px "Liberation Serif", serif; }
.small { padding-right: 4px; }
.last button { width: 47px; }

.tri { display: block; width: 0; height: 0; border: 6px solid transparent; }
.tri.down { border-top: 8px solid #111; border-bottom: 0; }
.tri.left { border-right: 7px solid #444; border-left: 0; }
.tri.right { border-left: 7px solid #444; border-right: 0; }
.tri.left.off { border-right-color: #8c8982; }
.tri.right.off { border-left-color: #8c8982; }
.cbtn .tri.down { border-top-color: #555; }

.work {
  flex: 1;
  display: grid;
  grid-template-columns: 403fr 703fr 892fr;
  gap: 10px;
  padding: 9px 14px 5px 11px;
}
.panel { min-width: 0; min-height: 0; display: flex; flex-direction: column; border-right: 3px solid #e6e3dd; }
.grip { display: inline-block; width: 4px; height: 17px; border: solid #9a978f; border-width: 0 2px 1px 0; box-shadow: inset 1px 0 #fff; margin-right: 4px; }
.pin { width: 17px; height: 17px; }
.x { width: 15px; height: 15px; }

.ptabs { display: flex; height: 32px; background: var(--bar); border-top: 1px solid var(--mid); }
.ptab {
  flex: 1 1 0;
  min-width: 0;
  display: flex;
  align-items: center;
  padding-left: 7px;
  border-left: 2px solid #dedbd5;
  font-size: 18px;
  white-space: nowrap;
}
.ptab.on { background: var(--face); }
.ptab svg { flex: none; }
.ptab .x { margin-left: 10px; }

.treebox { flex: 1; display: flex; flex-direction: column; background: #fff; border: solid var(--dark); border-width: 2px 0 0 3px; border-bottom: 2px solid #fff; }
.tree { flex: none; display: grid; grid-auto-rows: 1fr; height: 471px; padding-left: 8px; overflow: hidden; font-size: 18px; }
.tree li { display: flex; align-items: center; white-space: nowrap; }
.tree svg { flex: none; width: 44px; height: 29px; }
.tree i { flex: none; align-self: stretch; width: 33px; display: grid; place-items: center; background-repeat: no-repeat; }
.tree .v { background-image: linear-gradient(#c4c2be, #c4c2be); background-size: 2px 100%; background-position: 16px 0; }
.tree .h {
  background-image: linear-gradient(#c4c2be, #c4c2be), linear-gradient(#c4c2be, #c4c2be);
  background-size: 2px 100%, 17px 2px;
  background-position: 16px 0, 16px 50%;
}
.tree .end { background-size: 2px 50%, 17px 2px; }
.box { width: 15px; height: 15px; border: 2px solid #96938e; background: linear-gradient(#333, #333) center/7px 2px no-repeat #fff; }
.plus { background: linear-gradient(#333, #333) center/7px 2px no-repeat, linear-gradient(#333, #333) center/2px 7px no-repeat, #fff; }
.sel { background: #b5b3b3; padding: 4px 5px 4px 0; }
.hscroll { margin-top: auto; display: flex; height: 26px; }
.sb, .thumb, .dnav button, .cbtn { background: var(--face); border: 2px solid; border-color: #f6f4f0 #66635c #66635c #f6f4f0; }
.sb { width: 27px; display: grid; place-items: center; }
.track { flex: 1; background: #eae8e4; padding: 0 12% 0 16px; }
.thumb { height: 100%; }

.center { display: grid; grid-template-rows: 631fr 641fr; gap: 9px; min-width: 0; }
.editor, .prompt { border-left: 3px solid var(--dark); border-bottom: 3px solid #e6e3dd; }
.dtabs { display: flex; height: 32px; background: var(--bar); border-top: 2px solid #a09c97; justify-content: space-between; }
.dtab {
  display: flex;
  align-items: center;
  padding: 0 7px;
  background: var(--face);
  border-top: 1px solid #fff;
  border-right: 2px solid #77746d;
  font-size: 18px;
}
.dtab.blue { background: linear-gradient(90deg, #a9c6e6, #d0d0d0); }
.dicon { width: 18px; height: 22px; margin-right: 10px; }
.dicon.wide { width: 30px; height: 28px; margin: 0 3px 0 -5px; }
.dx { margin-left: 15px; font-size: 16px; }
.dnav { display: flex; align-items: center; padding-right: 3px; }
.dnav button { width: 25px; height: 22px; display: grid; place-items: center; }
.dnav .dlist { margin-left: 3px; }
.canvas { flex: 1; background: #fff; display: flex; flex-direction: column; justify-content: flex-end; position: relative; }
.diagram { position: absolute; inset: 0; }
.diagram text { font-size: 17px; fill: #1a1a1a; }
.diagram .wide { font-family: "DejaVu Sans", sans-serif; font-size: 16px; }
.crumbs { position: relative; display: flex; justify-content: space-between; background: #fff; }
.crumbs button { width: 82px; height: 31px; background: var(--sand); text-align: left; padding: 4px 0 0 16px; }

.promptbody { flex: 1; display: flex; flex-direction: column; border-top: 2px solid #efede8; }
.recbar { display: flex; justify-content: center; gap: 13px; padding: 8px 0 11px; margin-right: 4px; }
.rb { width: 52px; height: 52px; border: 2px solid; }
.rb svg { display: block; width: 48px; height: 48px; }
.live { background: #a5cbff; border-color: #1c8ca0 #08308c #08308c #1c8ca0; box-shadow: inset 3px 3px #e0efff, inset -3px -3px #5b93dc; }
.dim { background: #a5a5a5; border-color: #979797 #848484 #848484 #979797; box-shadow: inset 3px 3px #b2b2b2, inset -3px -3px #969696; }
.dark { background: #000; border-color: #105c70 #04047c #04047c #105c70; }
.plain { border-color: transparent; }
.wave { flex: 1; min-height: 200px; position: relative; background: #000; }
.wave svg { position: absolute; inset: 0; width: 100%; height: 100%; }
.wave polyline { fill: none; stroke: #c8c4f8; stroke-width: 3; stroke-linejoin: bevel; }
.length { background: #fff; height: 25px; padding-left: 4px; font: 19px/24px "Liberation Serif", serif; }
.pform { display: grid; grid-template-columns: 137px 1fr 40px; row-gap: 8px; padding: 9px 10px 19px 13px; }
.pform > .line, .sgrid > .line { grid-column: span 2; }
.pform > label, .sgrid > label { padding-top: 1px; }
textarea, input[type="text"] {
  display: block;
  width: 100%;
  background: #fff;
  border: 2px solid;
  border-color: #8a877f #f2f0ec #f2f0ec #8a877f;
  border-radius: 0;
  resize: none;
  padding: 4px 5px;
  height: 52px;
  overflow: hidden;
}
textarea { padding-top: 2px; }
.dots { align-self: center; justify-self: center; width: 15px; height: 4px; margin-top: 4px; margin-left: 4px; background: repeating-linear-gradient(90deg, #111 0 4px, transparent 4px 5px); }
.line { display: flex; align-items: center; }
.combo { position: relative; display: block; height: 32px; border: 2px solid; border-color: #77746d #f4f2ee #f4f2ee #77746d; border-top-width: 3px; }
.combo select { appearance: none; width: 100%; height: 27px; border: 0; border-radius: 0; background: #fff; padding: 0 3px; display: block; }
.cbtn { position: absolute; right: 0; top: 0; bottom: 0; width: 25px; display: grid; place-items: center; pointer-events: none; }
.combo.tts { width: 158px; }
.combo.file { width: 280px; }
.iconbtn svg { display: block; }
.face { margin-left: 10px; }
.face svg { width: 27px; height: 28px; }

.props { border: 0; }
.phead { display: flex; align-items: center; height: 32px; padding: 0 8px 0 6px; border: 1px solid #a09c97; box-shadow: inset 1px 1px #eceae5; font-size: 18px; }
.phead span { flex: 1; }
.phead .x { margin-left: 10px; }
.pbody { flex: 1; display: flex; flex-direction: column; border: 2px solid var(--dark); border-right: 3px solid #e6e3dd; border-bottom-color: #e6e3dd; padding-top: 1px; }
.subtabs { display: flex; align-items: flex-end; padding-left: 3px; height: 31px; }
.sub { width: 76px; height: 28px; border: solid #f4f2ee; border-width: 2px 0 0 2px; border-radius: 3px 0 0; }
.sub.on { width: 80px; height: 32px; padding-bottom: 4px; background: var(--face); border-right: 2px solid var(--dark); margin-bottom: -2px; position: relative; }
.pane { flex: 1; border: 2px solid; border-color: #fbfaf8 var(--dark) var(--dark) #eceae5; padding: 19px 20px 0 20px; }
.bar { display: flex; justify-content: space-between; align-items: center; height: 26px; padding-left: 9px; }
.bar h2 { font-weight: normal; }
.tools { display: flex; padding-right: 12px; }
.tools button { width: 36px; display: grid; place-items: center; }
.tools svg { width: 26px; height: 24px; }
.tablebox { margin: 4px 2px 0; height: 160px; border: 2px solid; border-color: var(--mid) transparent #f4f2ee #c4c1ba; }
.bar + .tablebox { margin-top: 2px; }
table { width: 100%; border-collapse: separate; border-spacing: 0; table-layout: fixed; }
th { height: 31px; padding: 0 4px; text-align: left; font-weight: normal; border: 2px solid; border-color: #eceae5 #66635c #55524c #eceae5; }
td { height: 51px; padding: 2px 1px; vertical-align: top; background: #c0bfbf; color: #fff; line-height: 22px; border: solid #908e8a; border-width: 0 2px 2px 0; }
.hot { background: #fccc5e; color: #1a1a1a; }
.second { margin-top: 11px; }
.steps { margin: 3px 2px 0; height: 162px; background: #fff; border: 2px solid; border-color: var(--mid) transparent #f4f2ee #c4c1ba; }
.steps li { height: 23px; background: #0a246a; color: #fff; padding-left: 3px; line-height: 22px; }

fieldset { min-width: 0; margin: 0; border: 2px solid #9a978f; padding: 0 6px; }
legend { font-style: italic; font-size: 15px; line-height: 20px; height: 20px; padding: 0 2px; color: #444; }
.outer { margin-top: 11px; padding: 6px 6px 7px; }
.content { padding: 9px 6px 13px; }
.simple { margin-top: 18px; padding: 7px 6px 10px; }
.info { margin-top: 9px; padding-top: 7px; padding-bottom: 9px; }
.barge { padding-top: 6px; height: 113px; }
.radios { display: flex; gap: 13px; }
.radios label { display: flex; align-items: center; gap: 8px; height: 20px; }
.content > .radios { padding-left: 3px; }
input[type="radio"] { appearance: none; width: 18px; height: 18px; border: 2px solid; border-color: #77746d #f4f2ee #f4f2ee #77746d; border-radius: 50%; background: #fff; }
input[type="radio"]:checked { background: radial-gradient(#222 0 3px, #fff 4px); }
input[type="checkbox"] { appearance: none; width: 20px; height: 20px; border: 2px solid; border-color: #77746d #f4f2ee #f4f2ee #77746d; background: #fff; display: grid; place-items: center; }
input[type="checkbox"]:checked::before { content: ""; width: 5px; height: 9px; border: solid #333; border-width: 0 3px 3px 0; transform: rotate(40deg); margin-top: -3px; }
.sgrid { display: grid; grid-template-columns: 110px 1fr 38px; row-gap: 9px; }
.sgrid .iconbtn { margin-left: 13px; }
.brow { display: grid; grid-template-columns: 129px 1fr; align-items: center; height: 24px; }
.brow + .brow { margin-top: 18px; }
.brow .radios { padding-left: 4px; }
.igrid { display: grid; grid-template-columns: 93px 1fr; row-gap: 9px; margin-top: 10px; }
.igrid input { height: 29px; }

.status { height: 33px; border-top: 2px solid var(--mid); box-shadow: inset 0 2px #f4f2ee; margin: 0 0 0 3px; padding: 6px 6px; }
```
